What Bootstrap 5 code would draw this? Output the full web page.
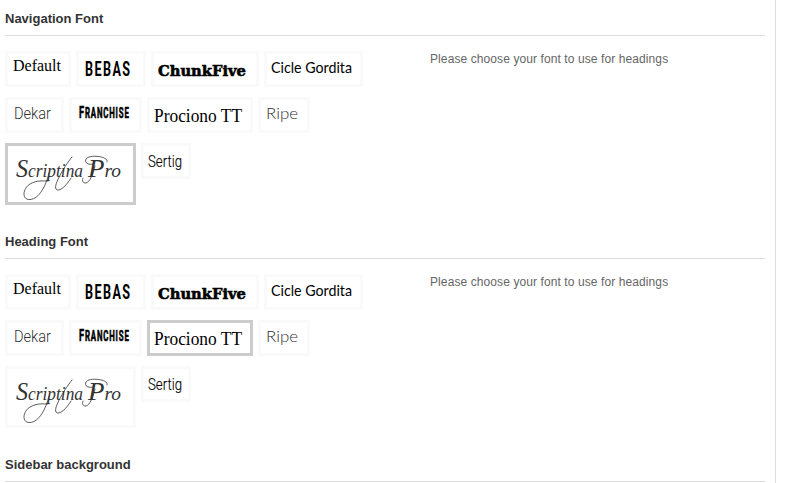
<!DOCTYPE html>
<html lang="en">
<head>
<meta charset="utf-8">
<meta name="viewport" content="width=device-width, initial-scale=1">
<title>Font options</title>
<link rel="stylesheet" href="https://cdn.jsdelivr.net/npm/bootstrap@5.3.0/dist/css/bootstrap.min.css">
<style>
body{font-family:"Liberation Sans",Arial,sans-serif;font-size:12px;line-height:16px;color:#666;background:#fff}
.panel{width:776px;height:483px;border-right:1px solid #ddd;padding-left:5px;padding-right:10px}
.option{height:223px}
.option-title{height:36px;margin:0;padding-top:10px;font-size:13px;line-height:17px;font-weight:700;color:#333;border-bottom:1px solid #ddd}
.choices{width:400px;padding-top:15px;row-gap:10px;column-gap:5px}
.choice{border:3px solid #fafafa;background:#fff;padding:0;line-height:0}
.choice.selected{border-color:#ccc}
.choice svg{display:block;overflow:visible}
.hint{margin:0;padding:15px 0 0 25px;letter-spacing:.095px}
.serif{font-family:"Liberation Serif",serif}
.cond{font-family:Roboto,sans-serif;font-weight:700}
.slab{font-family:"DejaVu Serif",serif;font-weight:700;stroke:#000;stroke-width:.6}
.geo{font-family:Lato,sans-serif}
.thin{font-family:Roboto,sans-serif;font-weight:300}
.script{font-family:"Liberation Serif",serif;font-style:italic;fill:#333}
.swash{fill:none;stroke:#333;stroke-width:.8;stroke-linecap:round}
</style>
</head>
<body>
<main class="panel overflow-hidden">
<section class="option">
<h2 class="option-title">Navigation Font</h2>
<div class="d-flex">
<div class="choices d-flex flex-wrap align-items-start">
<button class="choice"><svg width="60" height="30"><text class="serif" x="5" y="17" font-size="16" textLength="48">Default</text></svg></button>
<button class="choice"><svg width="64" height="30"><text class="cond" transform="translate(6 22) scale(.6 1)" font-size="21" textLength="75">BEBAS</text></svg></button>
<button class="choice"><svg width="102" height="30"><text class="slab" x="4" y="21.5" font-size="15.5" textLength="88" lengthAdjust="spacingAndGlyphs">ChunkFive</text></svg></button>
<button class="choice me-4"><svg width="93" height="30"><text class="geo" x="4" y="19" font-size="15" textLength="81" lengthAdjust="spacingAndGlyphs">Cicle Gordita</text></svg></button>
<button class="choice"><svg width="53" height="30"><text class="thin" x="6" y="19" font-size="16" textLength="37" lengthAdjust="spacingAndGlyphs" fill="#333">Dekar</text></svg></button>
<button class="choice"><svg width="67" height="30"><text class="cond" transform="translate(7 18) scale(.56 1)" stroke="#000" stroke-width=".6" font-size="16.5" textLength="89">F<tspan font-size="14">RANCHISE</tspan></text></svg></button>
<button class="choice"><svg width="100" height="30"><text class="serif" x="4" y="22" font-size="18.5" textLength="88" lengthAdjust="spacingAndGlyphs">Prociono TT</text></svg></button>
<button class="choice me-5"><svg width="46" height="30"><text class="geo" x="5" y="18.5" font-size="16.5" font-weight="300" textLength="32" lengthAdjust="spacingAndGlyphs" fill="#333">Ripe</text></svg></button>
<button class="choice selected"><svg width="125" height="56"><text class="script" x="8" y="31" font-size="18" textLength="67" lengthAdjust="spacingAndGlyphs"><tspan font-size="25">S</tspan>criptina</text><text class="script" x="80" y="31" font-size="18" textLength="33" lengthAdjust="spacingAndGlyphs"><tspan font-size="25">P</tspan>ro</text><g class="swash"><path d="M41 27C38 40 31 53 22 53.5C13 54 15 42 22 38C29 34 35 35 40 35"/><path d="M64 11C58 18 45 39 48 43C51 47 59 39 63 32"/><path d="M85 18C77 20 75 13 81 11C87 9 101 11 99 16M87 20C85 28 82 36 78 37C74 37 74 34 75 32"/></g></svg></button>
<button class="choice"><svg width="44" height="30"><text class="thin" x="4" y="21" font-size="17" textLength="34" lengthAdjust="spacingAndGlyphs" stroke="#000" stroke-width=".15">Sertig</text></svg></button>
</div>
<p class="hint">Please choose your font to use for headings</p>
</div>
</section>
<section class="option">
<h2 class="option-title">Heading Font</h2>
<div class="d-flex">
<div class="choices d-flex flex-wrap align-items-start">
<button class="choice"><svg width="60" height="30"><text class="serif" x="5" y="17" font-size="16" textLength="48">Default</text></svg></button>
<button class="choice"><svg width="64" height="30"><text class="cond" transform="translate(6 22) scale(.6 1)" font-size="21" textLength="75">BEBAS</text></svg></button>
<button class="choice"><svg width="102" height="30"><text class="slab" x="4" y="21.5" font-size="15.5" textLength="88" lengthAdjust="spacingAndGlyphs">ChunkFive</text></svg></button>
<button class="choice me-4"><svg width="93" height="30"><text class="geo" x="4" y="19" font-size="15" textLength="81" lengthAdjust="spacingAndGlyphs">Cicle Gordita</text></svg></button>
<button class="choice"><svg width="53" height="30"><text class="thin" x="6" y="19" font-size="16" textLength="37" lengthAdjust="spacingAndGlyphs" fill="#333">Dekar</text></svg></button>
<button class="choice"><svg width="67" height="30"><text class="cond" transform="translate(7 18) scale(.56 1)" stroke="#000" stroke-width=".6" font-size="16.5" textLength="89">F<tspan font-size="14">RANCHISE</tspan></text></svg></button>
<button class="choice selected"><svg width="100" height="30"><text class="serif" x="4" y="22" font-size="18.5" textLength="88" lengthAdjust="spacingAndGlyphs">Prociono TT</text></svg></button>
<button class="choice me-5"><svg width="46" height="30"><text class="geo" x="5" y="18.5" font-size="16.5" font-weight="300" textLength="32" lengthAdjust="spacingAndGlyphs" fill="#333">Ripe</text></svg></button>
<button class="choice"><svg width="125" height="56"><text class="script" x="8" y="31" font-size="18" textLength="67" lengthAdjust="spacingAndGlyphs"><tspan font-size="25">S</tspan>criptina</text><text class="script" x="80" y="31" font-size="18" textLength="33" lengthAdjust="spacingAndGlyphs"><tspan font-size="25">P</tspan>ro</text><g class="swash"><path d="M41 27C38 40 31 53 22 53.5C13 54 15 42 22 38C29 34 35 35 40 35"/><path d="M64 11C58 18 45 39 48 43C51 47 59 39 63 32"/><path d="M85 18C77 20 75 13 81 11C87 9 101 11 99 16M87 20C85 28 82 36 78 37C74 37 74 34 75 32"/></g></svg></button>
<button class="choice"><svg width="44" height="30"><text class="thin" x="4" y="21" font-size="17" textLength="34" lengthAdjust="spacingAndGlyphs" stroke="#000" stroke-width=".15">Sertig</text></svg></button>
</div>
<p class="hint">Please choose your font to use for headings</p>
</div>
</section>
<section class="option">
<h2 class="option-title">Sidebar background</h2>
</section>
</main>
<script src="https://cdn.jsdelivr.net/npm/bootstrap@5.3.0/dist/js/bootstrap.bundle.min.js"></script>
</body>
</html>
